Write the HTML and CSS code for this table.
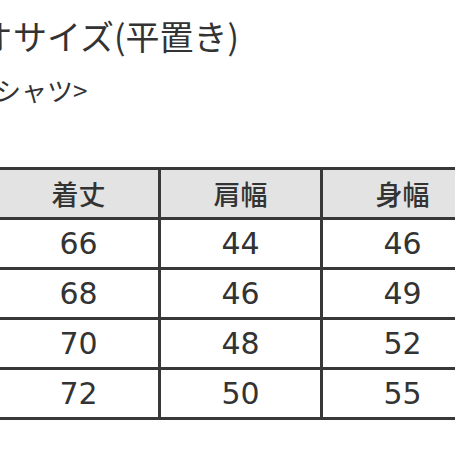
FILE: index.html
```html
<!DOCTYPE html>
<html lang="ja">
<head>
<meta charset="utf-8">
<link rel="stylesheet" href="styles.css">
</head>
<body>
<div class="page">
  <div class="title">オサイズ(平置き)</div>
  <div class="subtitle">シャツ&gt;</div>
  <table class="sizes">
    <thead>
      <tr><th>着丈</th><th>肩幅</th><th>身幅</th></tr>
    </thead>
    <tbody>
      <tr><td>66</td><td>44</td><td>46</td></tr>
      <tr><td>68</td><td>46</td><td>49</td></tr>
      <tr><td>70</td><td>48</td><td>52</td></tr>
      <tr><td>72</td><td>50</td><td>55</td></tr>
    </tbody>
  </table>
</div>
</body>
</html>
```

FILE: styles.css
```css
html, body {
  margin: 0;
  padding: 0;
  background: #ffffff;
  overflow: hidden;
}
.page {
  width: 455px;
  height: 455px;
  overflow: hidden;
  display: flex;
  flex-direction: column;
  font-family: "Noto Sans CJK JP", "DejaVu Sans", sans-serif;
  color: #333333;
}
.title {
  margin-top: 15px;
  margin-left: -21px;
  font-size: 34px;
  line-height: 42px;
  white-space: nowrap;
}
.subtitle {
  margin-top: 18px;
  margin-left: -5px;
  font-size: 26px;
  line-height: 30px;
  white-space: nowrap;
}
.sizes {
  margin-top: 62px;
  margin-left: -4px;
  border-collapse: collapse;
  table-layout: fixed;
  width: 489px;
  flex: none;
}
.sizes th, .sizes td {
  height: 47px;
  padding: 0;
  border: 3px solid #383838;
  text-align: center;
  vertical-align: middle;
  color: #333333;
}
.sizes th {
  background: #e3e3e3;
  font-family: "Noto Sans CJK JP", sans-serif;
  font-weight: 500;
  font-size: 27px;
}
.sizes td {
  font-family: "DejaVu Sans", sans-serif;
  font-size: 30px;
}
```
